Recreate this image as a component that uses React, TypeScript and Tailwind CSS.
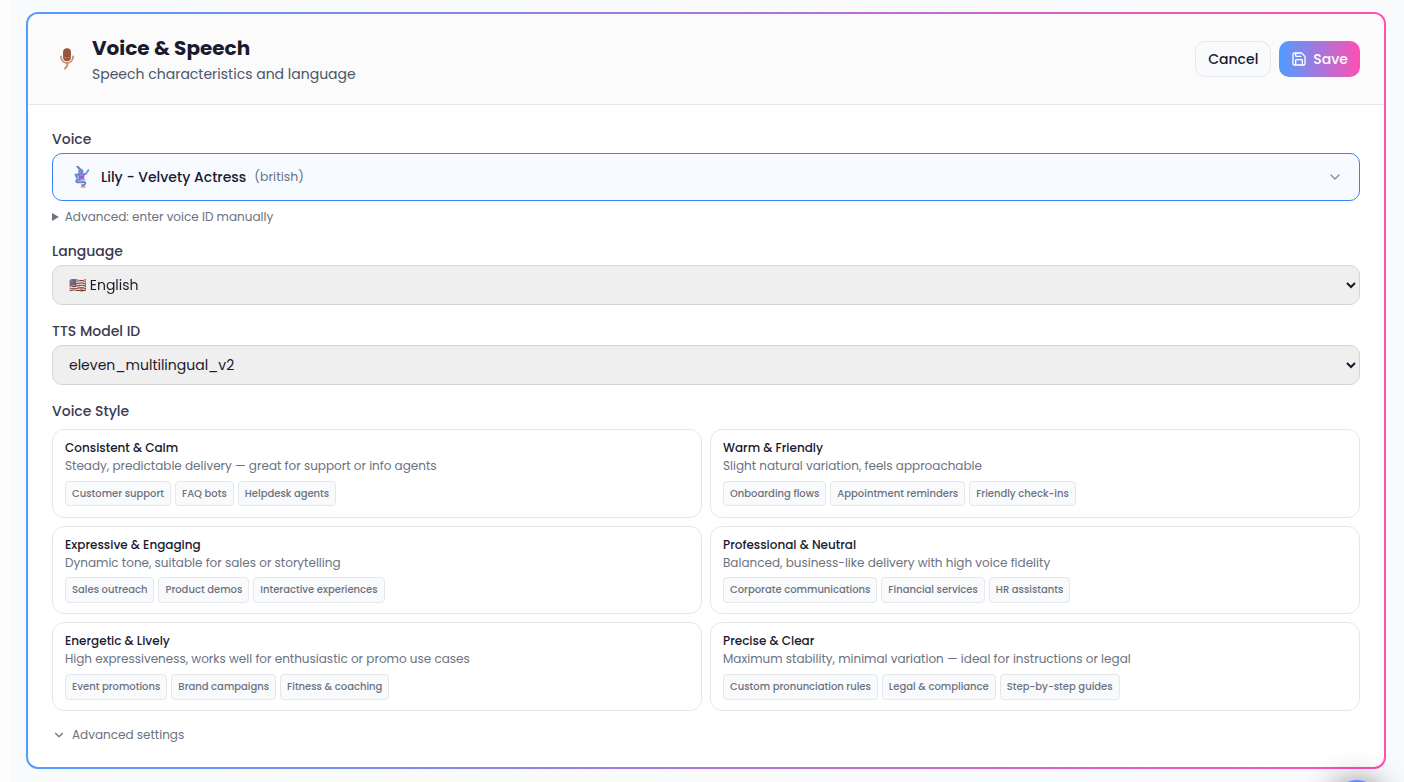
import { ChevronDown, Save } from 'lucide-react';

interface StyleOption {
  title: string;
  description: string;
  tags: string[];
}

const STYLES: StyleOption[] = [
  {
    title: 'Consistent & Calm',
    description: 'Steady, predictable delivery — great for support or info agents',
    tags: ['Customer support', 'FAQ bots', 'Helpdesk agents'],
  },
  {
    title: 'Warm & Friendly',
    description: 'Slight natural variation, feels approachable',
    tags: ['Onboarding flows', 'Appointment reminders', 'Friendly check-ins'],
  },
  {
    title: 'Expressive & Engaging',
    description: 'Dynamic tone, suitable for sales or storytelling',
    tags: ['Sales outreach', 'Product demos', 'Interactive experiences'],
  },
  {
    title: 'Professional & Neutral',
    description: 'Balanced, business-like delivery with high voice fidelity',
    tags: ['Corporate communications', 'Financial services', 'HR assistants'],
  },
  {
    title: 'Energetic & Lively',
    description: 'High expressiveness, works well for enthusiastic or promo use cases',
    tags: ['Event promotions', 'Brand campaigns', 'Fitness & coaching'],
  },
  {
    title: 'Precise & Clear',
    description: 'Maximum stability, minimal variation — ideal for instructions or legal',
    tags: ['Custom pronunciation rules', 'Legal & compliance', 'Step-by-step guides'],
  },
];

function MicIcon() {
  return (
    <svg width="14" height="22" viewBox="0 0 14 22" fill="none" strokeLinecap="round">
      <path d="M7 15.5c1.400 2-.3 3.200-2 5" stroke="#c99a78" strokeWidth="2.200" />
      <path d="M1 8.500c0 4 2.600 6.500 6 6.500s6-2.500 6-6.500" stroke="#c4936f" strokeWidth="1.800" />
      <rect x="3" y=".3" width="8" height="12.900" rx="4" fill="#9c5b40" />
      <path d="M5.300 3v6M7.100 2v8.500M9 3v6" stroke="#7f4833" strokeWidth=".7" strokeDasharray=".6 1.500" />
      <path d="M3.600 9.500h7" stroke="#b98870" strokeWidth=".6" />
    </svg>
  );
}

function GenieIcon() {
  return (
    <svg width="16" height="22" viewBox="0 0 16 22" fill="none" strokeLinecap="round" strokeLinejoin="round">
      {/* hat and head */}
      <path d="M3.500.6 6.800 4.300" stroke="#76809f" strokeWidth="2.200" />
      <circle cx="6.800" cy="5.400" r="2.600" fill="#6190dc" />
      {/* arms */}
      <path d="M8.500 8.500 11.800 8 14.300 4.200" stroke="#6c9be0" strokeWidth="2" />
      <path d="M5 8.500 1.600 8.800 3 11.500" stroke="#5f86cf" strokeWidth="2" />
      {/* body */}
      <path d="M4 7.500h6.800l-.8 5-5.200.8z" fill="#8f65c6" />
      <path d="M6 9h3" stroke="#d38ccb" strokeWidth="1" />
      {/* tail and lamp */}
      <path d="M9.200 12.200c-3 1.300-6.700.6-6.900 2.800-.2 2 4 1.200 7.200 1 2.500-.2 2.600 2.700-1.300 3.300" stroke="#6b82d6" strokeWidth="2" />
      <path d="M5 14.400 10.800 13.600" stroke="#a48be0" strokeWidth="1.200" />
      <path d="M7.500 20.800h3.500" stroke="#dda077" strokeWidth="1.700" />
    </svg>
  );
}

function FieldLabel({ children }: { children: string }) {
  return <div className="text-sm font-medium text-[#3a3a50]">{children}</div>;
}

function SelectField({ label, value, muted }: { label: string; value: string; muted?: boolean }) {
  const tone = muted ? 'saturate-[.6] hue-rotate-15' : '';

  return (
    <div className="flex flex-col gap-1">
      <FieldLabel>{label}</FieldLabel>
      <select
        defaultValue={value}
        className={`h-10 w-full rounded-[10px] border border-[#d1d5db] bg-[#efefef] px-3 text-sm text-[#1a1a2e] ${tone}`}
      >
        <option value={value}>{value}</option>
      </select>
    </div>
  );
}

function StyleCard({ title, description, tags }: StyleOption) {
  return (
    <button
      type="button"
      className="rounded-xl border border-[#e5e7eb] bg-white px-3 pt-2.5 pb-[10.2px] text-left"
    >
      <div className="text-xs font-medium text-[#1a1a2e]">{title}</div>
      <div className="mt-0.5 text-xs text-[#6b7280]">{description}</div>
      <div className="mt-[6.8px] flex gap-1">
        {tags.map((tag) => (
          <span
            key={tag}
            className="rounded border border-[#e5e7eb] bg-[#f9fafc] px-1.5 py-1 text-[10px] leading-[15.6px] font-medium text-[#6b7280]"
          >
            {tag}
          </span>
        ))}
      </div>
    </button>
  );
}

export default function App() {
  return (
    <div className="flex h-[782px] overflow-hidden bg-[#fdfdfe] pl-2.5 font-['Poppins','Inter',sans-serif]">
      <div className="flex-1 bg-[#f8fafc] pt-3 pr-[18px] pl-4">

        <div className="rounded-xl bg-linear-to-r/srgb from-[#4f9dff] to-[#ff4fb4] p-0.5">
          <div className="overflow-hidden rounded-[10px] bg-white">

            {/* HEADER */}
            <div className="flex items-center justify-between border-b border-[#e5e7eb] bg-[#fbfbfb] px-6 py-5">
              <div className="flex items-center gap-3">
                <span className="flex w-7 justify-center pl-0.5">
                  <MicIcon />
                </span>
                <div>
                  <h1 className="text-xl leading-7 font-bold text-[#1a1a2e]">Voice &amp; Speech</h1>
                  <p className="mt-0.5 text-sm text-[#4a5568]">Speech characteristics and language</p>
                </div>
              </div>

              <div className="flex gap-2">
                <button
                  type="button"
                  className="h-9 rounded-[10px] border border-[#e5e7eb] bg-[#f9fafc] px-3 text-sm font-medium text-[#1a1a2e]"
                >
                  Cancel
                </button>
                <button
                  type="button"
                  className="flex h-9 items-center gap-1.5 rounded-[10px] bg-linear-to-r/srgb from-[#4f9dff] to-[#ff4fb4] px-3 text-sm font-medium text-white"
                >
                  <Save size={16} />
                  Save
                </button>
              </div>
            </div>

            {/* BODY */}
            <div className="flex flex-col gap-4 p-6">
              <div>
                <FieldLabel>Voice</FieldLabel>
                <button
                  type="button"
                  className="mt-1 flex h-12 w-full items-center rounded-[10px] border border-[#3b82f6] bg-[#f7faff] px-4 text-sm"
                >
                  <span className="flex w-6 justify-center pl-0.5">
                    <GenieIcon />
                  </span>
                  <span className="ml-2 font-medium text-[#1a1a2e]">Lily - Velvety Actress</span>
                  <span className="ml-2 text-[12.5px] text-[#6b7280]">(british)</span>
                  <ChevronDown size={16} className="ml-auto text-[#8e8a99]" />
                </button>
                <details className="mt-2 text-xs text-[#6b7280]">
                  <summary>Advanced: enter voice ID manually</summary>
                </details>
              </div>

              <SelectField label="Language" value="🇺🇸 English" muted />
              <SelectField label="TTS Model ID" value="eleven_multilingual_v2" />

              <div>
                <FieldLabel>Voice Style</FieldLabel>
                <div className="mt-2 grid grid-cols-2 gap-2">
                  {STYLES.map((style) => (
                    <StyleCard key={style.title} {...style} />
                  ))}
                </div>
              </div>

              <button type="button" className="flex items-center gap-1.5 text-xs text-[#6b7280]">
                <ChevronDown size={14} />
                Advanced settings
              </button>
            </div>

          </div>
        </div>

      </div>

      {/* floating chat launcher, mostly below the fold */}
      <div className="fixed right-[19px] -bottom-[54px] size-14 rounded-full bg-linear-to-r/srgb from-[#4f9dff] to-[#8b6cf0] shadow-[0_0_30px_rgba(0,0,0,0.45)]" />
    </div>
  );
}
